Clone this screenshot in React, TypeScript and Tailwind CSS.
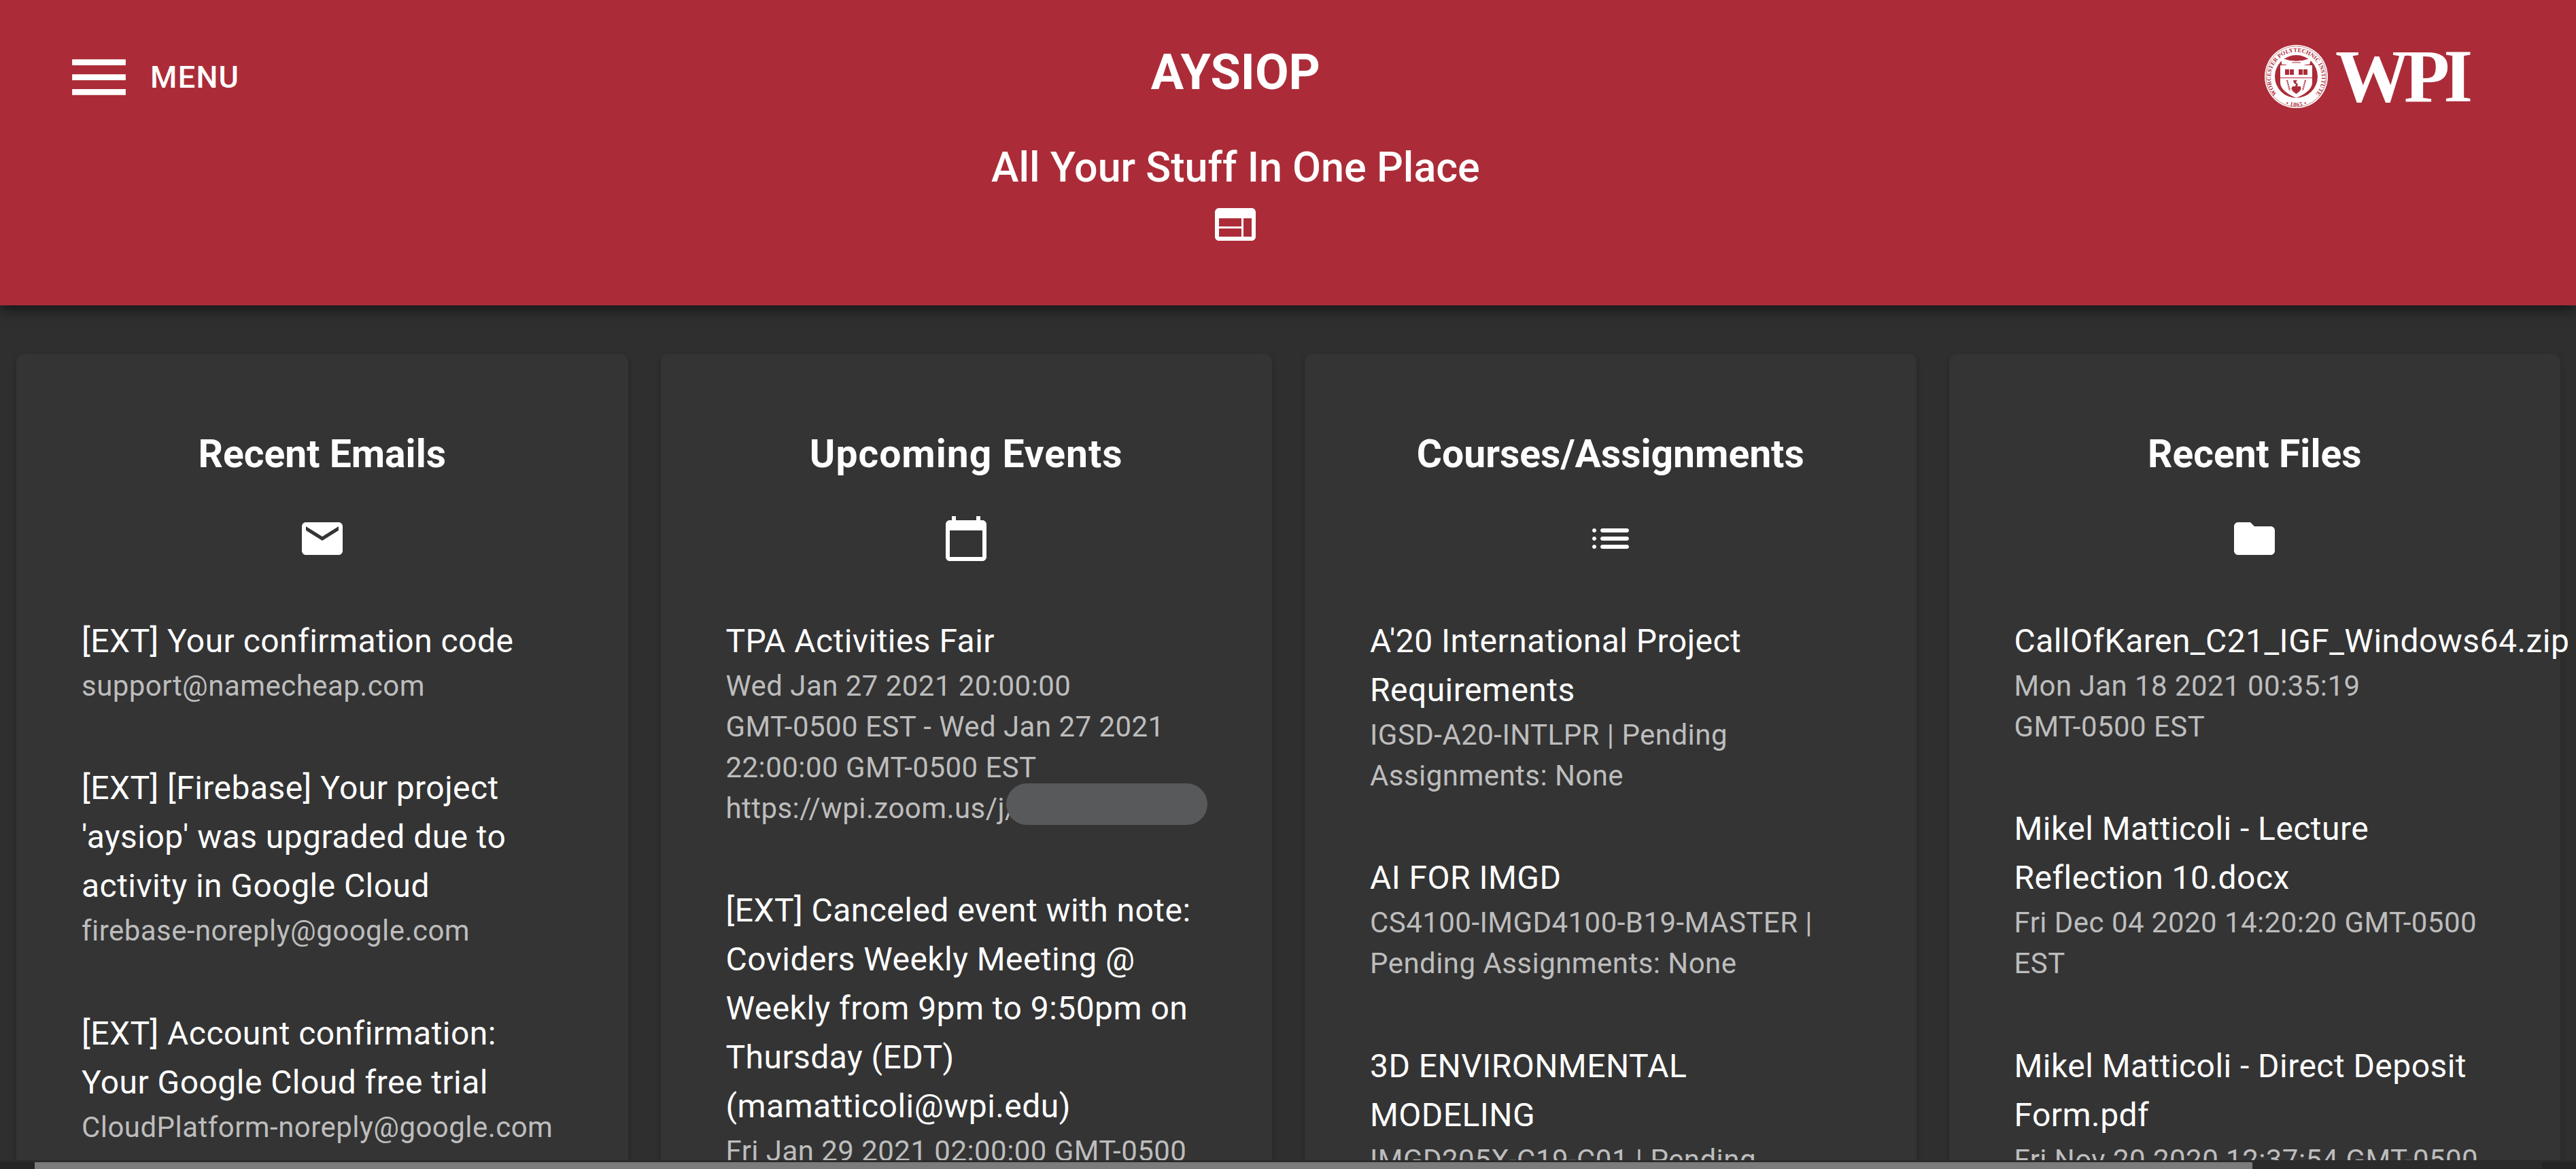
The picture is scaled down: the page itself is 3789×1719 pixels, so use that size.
import React from "react";

const MATERIAL = {
  menu: "M3 18h18v-2H3v2zm0-5h18v-2H3v2zm0-7v2h18V6H3z",
  web: "M20 4H4c-1.1 0-1.99.9-1.99 2L2 18c0 1.1.9 2 2 2h16c1.1 0 2-.9 2-2V6c0-1.1-.9-2-2-2zm-5 14H4v-4h11v4zm0-5H4V9h11v4zm5 5h-4V9h4v9z",
  email: "M20 4H4c-1.1 0-1.99.9-1.99 2L2 18c0 1.1.9 2 2 2h16c1.1 0 2-.9 2-2V6c0-1.1-.9-2-2-2zm0 4l-8 5-8-5V6l8 5 8-5v2z",
  calendar: "M20 3h-1V1h-2v2H7V1H5v2H4c-1.1 0-2 .9-2 2v16c0 1.1.9 2 2 2h16c1.1 0 2-.9 2-2V5c0-1.1-.9-2-2-2zm0 18H4V8h16v13z",
  list: "M4 13c.55 0 1-.45 1-1s-.45-1-1-1-1 .45-1 1 .45 1 1 1zm0 4c.55 0 1-.45 1-1s-.45-1-1-1-1 .45-1 1 .45 1 1 1zm0-8c.55 0 1-.45 1-1s-.45-1-1-1-1 .45-1 1 .45 1 1 1zm4 4h12c.55 0 1-.45 1-1s-.45-1-1-1H8c-.55 0-1 .45-1 1s.45 1 1 1zm0 4h12c.55 0 1-.45 1-1s-.45-1-1-1H8c-.55 0-1 .45-1 1s.45 1 1 1zM7 8c0 .55.45 1 1 1h12c.55 0 1-.45 1-1s-.45-1-1-1H8c-.55 0-1 .45-1 1z",
  folder: "M10 4H4c-1.1 0-1.99.9-1.99 2L2 18c0 1.1.9 2 2 2h16c1.1 0 2-.9 2-2V8c0-1.1-.9-2-2-2h-8l-2-2z",
};

const Icon = ({ d, className }: { d: string; className: string }) => (
  <svg viewBox="0 0 24 24" fill="white" className={className}>
    <path d={d} />
  </svg>
);

const Seal = () => (
  <svg viewBox="0 0 93 93" className="w-[93px] h-[93px] shrink-0">
    <circle cx="46.5" cy="46.5" r="46.5" fill="white" />
    <circle cx="46.5" cy="46.5" r="44.6" fill="none" stroke="#ab2c38" strokeWidth="0.6" />
    <circle cx="46.5" cy="46.5" r="31.5" fill="#ab2c38" />
    <defs>
      <path id="sealRing" d="M 17 71 A 37.5 37.5 0 1 1 76 71" />
      <path id="sealYear" d="M 12 62 A 38 38 0 0 0 81 62" />
    </defs>
    <text fontSize="8.6" fontWeight="700" fill="#ab2c38" fontFamily="'Liberation Serif', serif">
      <textPath href="#sealRing" startOffset="50%" textAnchor="middle">
        WORCESTER POLYTECHNIC INSTITUTE
      </textPath>
    </text>
    <text fontSize="8.6" fontWeight="700" fill="#ab2c38" fontFamily="'Liberation Serif', serif">
      <textPath href="#sealYear" startOffset="50%" textAnchor="middle" dominantBaseline="hanging">
        • 1865 •
      </textPath>
    </text>
    {/* shield */}
    <path d="M23 30h47v25c0 11-12 18-23.500 23C35 73 23 66 23 55z" fill="white" />
    <path d="M23 48.500h47" stroke="#ab2c38" strokeWidth="1" />
    <rect x="30" y="36" width="13" height="8" fill="#ab2c38" />
    <rect x="50" y="36" width="13" height="8" fill="#ab2c38" />
    <path d="M36.500 36v8M56.500 36v8" stroke="white" strokeWidth="1" />
    {/* ribbon */}
    <path d="M25 22c5-3 10 2 15 1 4 1 9 1 13 0 5 1 10-4 15-1l-2 7c-5-1-9 2-13 2-5 0-11 0-15 0-4 0-8-3-13-2z" fill="white" />
    <path d="M40 26h13" stroke="#ab2c38" strokeWidth="1" />
    {/* heart */}
    <path d="M46.500 72c-4-3-7-5-7-8 0-3 4-4 7-1 3-3 7-2 7 1 0 3-3 5-7 8z" fill="#ab2c38" />
    {/* laurels and hammer */}
    <path d="M33 52l4 15M60 52l-4 15" stroke="#ab2c38" strokeWidth="2.200" strokeDasharray="2 1" />
    <path d="M42 52h6l-2 3 3 3-1 3h5v2h-12v-2h4l1-3-3-2z" fill="#ab2c38" />
  </svg>
);

// word joiner keeps GMT-0500 on one line
const GMT = "GMT-\u20600500";

const CARDS = [
  {
    title: "Recent Emails",
    icon: MATERIAL.email,
    titleClass: "",
    items: [
      { primary: "[EXT] Your confirmation code", secondary: "support@namecheap.com" },
      {
        primary: "[EXT] [Firebase] Your project 'aysiop' was upgraded due to activity in Google Cloud",
        secondary: "firebase-noreply@google.com",
      },
      {
        primary: "[EXT] Account confirmation: Your Google Cloud free trial",
        secondary: "CloudPlatform-noreply@google.com",
      },
    ],
  },
  {
    title: "Upcoming Events",
    icon: MATERIAL.calendar,
    titleClass: "tracking-[1px]",
    items: [
      {
        primary: "TPA Activities Fair",
        secondary: `Wed Jan 27 2021 20:00:00 ${GMT} EST - Wed Jan 27 2021 22:00:00 ${GMT} EST https://wpi.zoom.us/j/`,
        redacted: true,
      },
      {
        primary: "[EXT] Canceled event with note: Coviders Weekly Meeting @ Weekly from 9pm to 9:50pm on Thursday (EDT) (mamatticoli@wpi.edu)",
        secondary: `Fri Jan 29 2021 02:00:00 ${GMT}`,
      },
    ],
  },
  {
    title: "Courses/Assignments",
    icon: MATERIAL.list,
    titleClass: "",
    items: [
      {
        primary: "A'20 International Project Requirements",
        secondary: "IGSD-A20-INTLPR | Pending Assignments: None",
      },
      { primary: "AI FOR IMGD", secondary: "CS4100-IMGD4100-B19-MASTER | Pending Assignments: None" },
      { primary: "3D ENVIRONMENTAL MODELING", secondary: "IMGD205X-C19-C01 | Pending" },
    ],
  },
  {
    title: "Recent Files",
    icon: MATERIAL.folder,
    titleClass: "",
    items: [
      { primary: "CallOfKaren_C21_IGF_Windows64.zip", secondary: `Mon Jan 18 2021 00:35:19 ${GMT} EST` },
      {
        primary: "Mikel Matticoli - Lecture Reflection 10.docx",
        secondary: `Fri Dec 04 2020 14:20:20 ${GMT} EST`,
      },
      {
        primary: "Mikel Matticoli - Direct Deposit Form.pdf",
        secondary: `Fri Nov 20 2020 12:37:54 ${GMT}`,
      },
    ],
  },
];

const App: React.FC = () => {
  return (
    <div className="h-[1719px] w-[3789px] flex flex-col overflow-hidden bg-[#2f2f2f] text-white [font-family:Roboto,sans-serif]">

      {/* HEADER */}
      <header className="relative z-10 h-[449px] shrink-0 flex items-start bg-[#ab2c38] shadow-[0_6px_18px_rgba(0,0,0,0.55)]">
        <div className="w-[1458px] shrink-0 flex items-center pl-[93px] pt-[61px]">
          <Icon d={MATERIAL.menu} className="w-[105px] h-[105px]" />
          <span className="ml-[23px] text-[45px] leading-[52px] font-medium tracking-[1.3px]">MENU</span>
        </div>

        <div className="flex flex-col items-center pt-[65px]">
          <h1 className="text-[72px] leading-[84px] font-bold">AYSIOP</h1>
          <p className="mt-[61px] text-[61px] leading-[72px] font-medium whitespace-nowrap">All Your Stuff In One Place</p>
          <Icon d={MATERIAL.web} className="mt-[12px] w-[72px] h-[72px]" />
        </div>

        <div className="flex-1 flex justify-end items-center pt-[66px] pr-[161px]">
          <Seal />
          <span className="ml-[11px] text-[110px] leading-[93px] font-bold tracking-[-9px] [font-family:'Liberation_Serif',serif]">
            WPI
          </span>
        </div>
      </header>

      {/* CARDS */}
      <main className="flex-1 min-h-0 overflow-hidden pl-[24px] pr-[23px] pt-[71px]">
        <div className="grid grid-cols-4 gap-[48px] h-full">
          {CARDS.map((card) => (
            <section
              key={card.title}
              className="min-w-0 rounded-t-[12px] bg-[#343434] px-[48px] pt-[100px] shadow-[0_3px_9px_rgba(0,0,0,0.22)]"
            >
              <h2 className={`text-center text-[57px] leading-[96px] font-bold ${card.titleClass}`}>{card.title}</h2>
              <div className="mt-[40px] flex justify-center">
                <Icon d={card.icon} className="w-[72px] h-[72px]" />
              </div>
              <ul className="mt-[36.5px]">
                {card.items.map((item) => (
                  <li key={item.primary} className="px-[48px] py-[42.25px]">
                    <p className="text-[48px] leading-[72px] tracking-[0.45px]">{item.primary}</p>
                    <p className="text-[42px] leading-[60px] tracking-[0.45px] text-[#bdbdbd]">
                      {item.secondary}
                      {item.redacted && (
                        <span className="relative inline-block w-0 h-[60px] align-top">
                          <span className="absolute -left-[16px] -top-[7px] h-[61px] w-[296px] rounded-full bg-[#58595b]" />
                        </span>
                      )}
                    </p>
                  </li>
                ))}
              </ul>
            </section>
          ))}
        </div>
      </main>

      {/* SCROLLBAR */}
      <div className="h-[13px] shrink-0 flex items-end bg-[#2b2b2b]">
        <div className="h-[10px] w-[51px] bg-[#242424]" />
        <div className="h-[10px] w-[3262px] bg-[#7b7b7b]" />
        <div className="h-[10px] flex-1 bg-[#2b2b2b]" />
        <div className="h-[10px] w-[50px] bg-[#242424]" />
      </div>
    </div>
  );
};

export default App;
